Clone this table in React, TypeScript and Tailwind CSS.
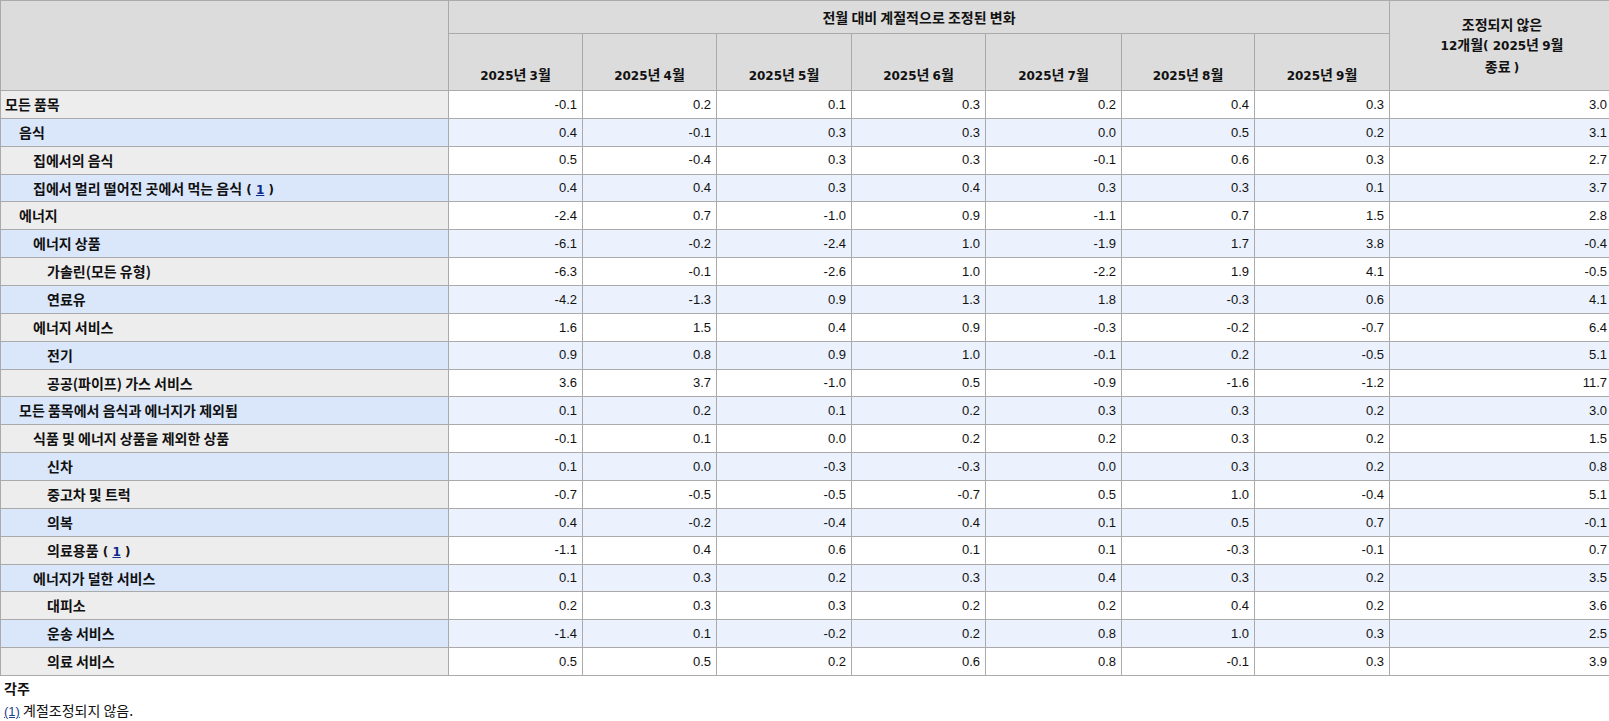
import React from 'react';

type Row = { label: string; level: number; note?: boolean; values: string[]; annual: string };

const rows: Row[] = [
  { label: '모든 품목', level: 0, values: ['-0.1', '0.2', '0.1', '0.3', '0.2', '0.4', '0.3'], annual: '3.0' },
  { label: '음식', level: 1, values: ['0.4', '-0.1', '0.3', '0.3', '0.0', '0.5', '0.2'], annual: '3.1' },
  { label: '집에서의 음식', level: 2, values: ['0.5', '-0.4', '0.3', '0.3', '-0.1', '0.6', '0.3'], annual: '2.7' },
  { label: '집에서 멀리 떨어진 곳에서 먹는 음식', level: 2, note: true, values: ['0.4', '0.4', '0.3', '0.4', '0.3', '0.3', '0.1'], annual: '3.7' },
  { label: '에너지', level: 1, values: ['-2.4', '0.7', '-1.0', '0.9', '-1.1', '0.7', '1.5'], annual: '2.8' },
  { label: '에너지 상품', level: 2, values: ['-6.1', '-0.2', '-2.4', '1.0', '-1.9', '1.7', '3.8'], annual: '-0.4' },
  { label: '가솔린(모든 유형)', level: 3, values: ['-6.3', '-0.1', '-2.6', '1.0', '-2.2', '1.9', '4.1'], annual: '-0.5' },
  { label: '연료유', level: 3, values: ['-4.2', '-1.3', '0.9', '1.3', '1.8', '-0.3', '0.6'], annual: '4.1' },
  { label: '에너지 서비스', level: 2, values: ['1.6', '1.5', '0.4', '0.9', '-0.3', '-0.2', '-0.7'], annual: '6.4' },
  { label: '전기', level: 3, values: ['0.9', '0.8', '0.9', '1.0', '-0.1', '0.2', '-0.5'], annual: '5.1' },
  { label: '공공(파이프) 가스 서비스', level: 3, values: ['3.6', '3.7', '-1.0', '0.5', '-0.9', '-1.6', '-1.2'], annual: '11.7' },
  { label: '모든 품목에서 음식과 에너지가 제외됨', level: 1, values: ['0.1', '0.2', '0.1', '0.2', '0.3', '0.3', '0.2'], annual: '3.0' },
  { label: '식품 및 에너지 상품을 제외한 상품', level: 2, values: ['-0.1', '0.1', '0.0', '0.2', '0.2', '0.3', '0.2'], annual: '1.5' },
  { label: '신차', level: 3, values: ['0.1', '0.0', '-0.3', '-0.3', '0.0', '0.3', '0.2'], annual: '0.8' },
  { label: '중고차 및 트럭', level: 3, values: ['-0.7', '-0.5', '-0.5', '-0.7', '0.5', '1.0', '-0.4'], annual: '5.1' },
  { label: '의복', level: 3, values: ['0.4', '-0.2', '-0.4', '0.4', '0.1', '0.5', '0.7'], annual: '-0.1' },
  { label: '의료용품', level: 3, note: true, values: ['-1.1', '0.4', '0.6', '0.1', '0.1', '-0.3', '-0.1'], annual: '0.7' },
  { label: '에너지가 덜한 서비스', level: 2, values: ['0.1', '0.3', '0.2', '0.3', '0.4', '0.3', '0.2'], annual: '3.5' },
  { label: '대피소', level: 3, values: ['0.2', '0.3', '0.3', '0.2', '0.2', '0.4', '0.2'], annual: '3.6' },
  { label: '운송 서비스', level: 3, values: ['-1.4', '0.1', '-0.2', '0.2', '0.8', '1.0', '0.3'], annual: '2.5' },
  { label: '의료 서비스', level: 3, values: ['0.5', '0.5', '0.2', '0.6', '0.8', '-0.1', '0.3'], annual: '3.9' },
];

const months = ['3', '4', '5', '6', '7', '8', '9'];
const monthWidths = ['w-[134px]', 'w-[134px]', 'w-[135px]', 'w-[134px]', 'w-[136px]', 'w-[133px]', 'w-[135px]'];
const indent = ['pl-[4px]', 'pl-[18px]', 'pl-[32px]', 'pl-[46px]'];

// latin glyphs in bold headers are set a bit smaller than the hangul around them
const latin = "font-['DejaVu_Sans',sans-serif] text-[12px]";
const num = "font-['Liberation_Sans',sans-serif] text-[13px]";
const cell = 'border border-[#aaaaaa]';
const head = 'bg-[#dcdcdc] border border-[#aaaaaa] font-bold text-center';

export default function App() {
  return (
    <div className="w-full overflow-hidden bg-white text-[14px] text-[#111] font-['Noto_Sans_CJK_KR','Noto_Sans',sans-serif]">
      <table className="table-fixed border-collapse w-[1614px]">
        <colgroup>
          <col className="w-[448px]" />
          {monthWidths.map((w, i) => (
            <col key={i} className={w} />
          ))}
          <col className="w-[225px]" />
        </colgroup>
        <thead>
          <tr className="h-[33px]">
            <th rowSpan={2} className={head}></th>
            <th colSpan={7} className={`${head} align-middle`}>
              전월 대비 계절적으로 조정된 변화
            </th>
            <th rowSpan={2} className={`${head} align-middle leading-[20px] px-2`}>
              조정되지 않은
              <br />
              <span className={latin}>12</span>개월<span className={latin}>( 2025</span>년 <span className={latin}>9</span>월
              <br />
              종료 <span className={latin}>)</span>
            </th>
          </tr>
          <tr className="h-[57px]">
            {months.map((m) => (
              <th key={m} className={`${head} align-bottom pb-[5px]`}>
                <span className={latin}>2025</span>년 <span className={latin}>{m}</span>월
              </th>
            ))}
          </tr>
        </thead>
        <tbody>
          {rows.map((r, i) => {
            const even = i % 2 === 1;
            const bg = even ? 'bg-[#ebf2fd]' : 'bg-white';
            return (
              <tr key={i} className="h-[27.86px]">
                <th
                  className={`${cell} text-left font-bold align-middle whitespace-nowrap ${indent[r.level]} ${
                    even ? 'bg-[#dae7fb]' : 'bg-[#eeeded]'
                  }`}
                >
                  {r.label}
                  {r.note && (
                    <span className={latin}>
                      {' '}( <a className="text-[#0b2a8a] underline">1</a> )
                    </span>
                  )}
                </th>
                {r.values.map((v, j) => (
                  <td key={j} className={`${cell} ${bg} ${num} text-right align-middle pr-[5px]`}>
                    {v}
                  </td>
                ))}
                <td className={`${cell} ${bg} ${num} text-right align-middle pr-[7px]`}>{r.annual}</td>
              </tr>
            );
          })}
        </tbody>
      </table>
      <div className="pt-[1px] pl-[4px] leading-[22px]">
        <div className="font-bold">각주</div>
        <div>
          <a className={`text-[#1f3f8f] underline ${num}`}>(1)</a> 계절조정되지 않음.
        </div>
      </div>
    </div>
  );
}
